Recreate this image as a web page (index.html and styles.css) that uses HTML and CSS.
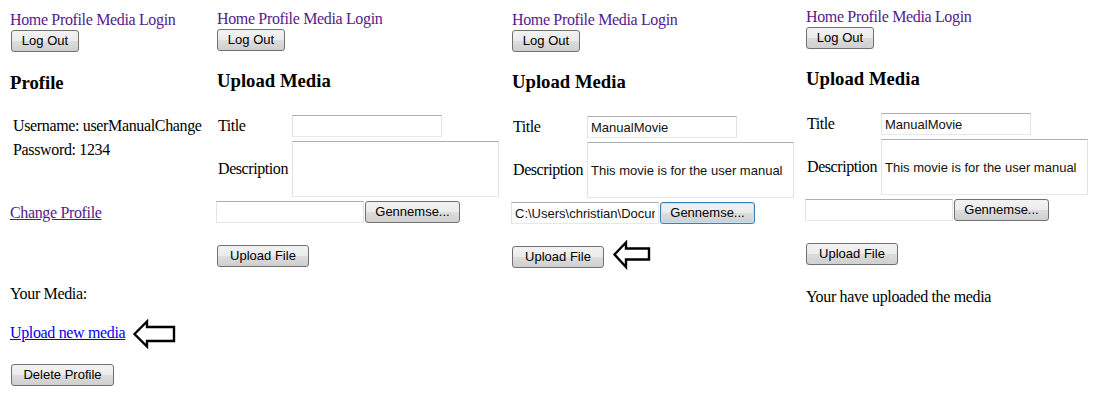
FILE: index.html
```html
<!DOCTYPE html>
<html lang="da">
<head>
<meta charset="utf-8">
<title>User manual screens</title>
<link rel="stylesheet" href="styles.css">
</head>
<body>
<div class="page">
  <section class="panel panel-1">
    <nav class="nav"><a href="#">Home</a> <a href="#">Profile</a> <a href="#">Media</a> <a href="#">Login</a></nav>
    <button class="btn btn-logout" type="button">Log Out</button>
    <h3 class="heading heading-profile">Profile</h3>
    <table class="info">
      <tr><td>Username: userManualChange</td></tr>
      <tr><td>Password: 1234</td></tr>
    </table>
    <div class="line change-line"><a class="link-visited" href="#">Change Profile</a></div>
    <div class="line media-label">Your Media:</div>
    <div class="line link-row"><a class="link-new" href="#">Upload new media</a><svg class="arrow arrow-lg" width="44" height="30" viewBox="0 0 44 30"><path d="M2.5 15 L15 2.5 L15 8 L42 8 L42 22 L15 22 L15 27.5 Z" fill="#fff" stroke="#000" stroke-width="2.4" stroke-linejoin="miter"/></svg></div>
    <button class="btn btn-delete" type="button">Delete Profile</button>
  </section>

  <section class="panel panel-2">
    <nav class="nav"><a href="#">Home</a> <a href="#">Profile</a> <a href="#">Media</a> <a href="#">Login</a></nav>
    <button class="btn btn-logout" type="button">Log Out</button>
    <h3 class="heading">Upload Media</h3>
    <table class="form-table">
      <tr><td class="label">Title</td><td><input class="field field-title" type="text" value="" readonly></td></tr>
      <tr><td class="label">Description</td><td><input class="field field-desc" type="text" value="" readonly></td></tr>
    </table>
    <div class="file-row"><input class="field field-file" type="text" value="" readonly><button class="btn btn-browse" type="button">Gennemse...</button></div>
    <div class="upload-row"><button class="btn btn-upload" type="button">Upload File</button></div>
  </section>

  <section class="panel panel-3">
    <nav class="nav"><a href="#">Home</a> <a href="#">Profile</a> <a href="#">Media</a> <a href="#">Login</a></nav>
    <button class="btn btn-logout" type="button">Log Out</button>
    <h3 class="heading">Upload Media</h3>
    <table class="form-table">
      <tr><td class="label">Title</td><td><input class="field field-title" type="text" value="ManualMovie" readonly></td></tr>
      <tr><td class="label">Description</td><td><input class="field field-desc" type="text" value="This movie is for the user manual" readonly></td></tr>
    </table>
    <div class="file-row"><input class="field field-file" type="text" value="C:\Users\christian\Documents\ManualMovie.avi" readonly><button class="btn btn-browse btn-focus" type="button">Gennemse...</button></div>
    <div class="upload-row"><button class="btn btn-upload" type="button">Upload File</button><svg class="arrow arrow-sm" width="40" height="30" viewBox="0 0 40 30"><path d="M2.5 14.5 L14 2.5 L14 8.5 L37 8.5 L37 19.5 L14 19.5 L14 27 Z" fill="#fff" stroke="#000" stroke-width="2.4" stroke-linejoin="miter"/></svg></div>
  </section>

  <section class="panel panel-4">
    <nav class="nav"><a href="#">Home</a> <a href="#">Profile</a> <a href="#">Media</a> <a href="#">Login</a></nav>
    <button class="btn btn-logout" type="button">Log Out</button>
    <h3 class="heading">Upload Media</h3>
    <table class="form-table">
      <tr><td class="label">Title</td><td><input class="field field-title" type="text" value="ManualMovie" readonly></td></tr>
      <tr><td class="label">Description</td><td><input class="field field-desc" type="text" value="This movie is for the user manual" readonly></td></tr>
    </table>
    <div class="file-row"><input class="field field-file" type="text" value="" readonly><button class="btn btn-browse" type="button">Gennemse...</button></div>
    <div class="upload-row"><button class="btn btn-upload" type="button">Upload File</button></div>
    <div class="line status">Your have uploaded the media</div>
  </section>
</div>
</body>
</html>
```

FILE: styles.css
```css
body {
  margin: 0;
  background: #fff;
  color: #000;
  font-family: "Liberation Serif", "Times New Roman", serif;
  font-size: 16px;
  letter-spacing: -0.35px;
}

.page {
  display: flex;
  align-items: flex-start;
}

.panel {
  flex: none;
  box-sizing: border-box;
  padding-left: 11px;
}

.panel-1 { width: 206px; padding-top: 11px; padding-left: 10px; }
.panel-2 { width: 295px; padding-top: 10px; }
.panel-3 { width: 294px; padding-top: 11px; }
.panel-4 { flex: 1; padding-top: 8px; }

.nav {
  height: 18px;
  line-height: 18px;
  white-space: nowrap;
}

.nav a {
  color: #551a8b;
  text-decoration: none;
}

.btn {
  display: block;
  box-sizing: border-box;
  height: 22px;
  margin: 0;
  padding: 0;
  border: 1px solid #707070;
  border-radius: 3px;
  background: linear-gradient(#f2f2f2 0%, #ebebeb 50%, #dddddd 50%, #cfcfcf 100%);
  color: #000;
  font-family: "Liberation Sans", Arial, sans-serif;
  font-size: 13px;
  line-height: 20px;
  letter-spacing: normal;
  text-align: center;
  white-space: nowrap;
}

.btn-logout { width: 68px; margin-top: 1px; margin-left: 1px; }
.panel-2 .btn-logout,
.panel-3 .btn-logout,
.panel-4 .btn-logout { margin-left: 0; }
.btn-delete { width: 103px; margin-top: 22px; margin-left: 1px; }
.btn-upload { width: 92px; flex: none; }
.btn-browse { width: 95px; flex: none; }

.btn-focus {
  border-color: #3c7fb1;
  box-shadow: inset 0 0 0 1px #bfe2f7;
}

.heading {
  margin: 19px 0 21px;
  font-size: 18.72px;
  line-height: 21px;
  font-weight: bold;
  letter-spacing: normal;
}

.heading-profile { margin: 20px 0 20px; }

.info {
  border-collapse: separate;
  border-spacing: 2px;
}

.info td {
  padding: 1px;
  line-height: 20px;
  white-space: nowrap;
}

.line { line-height: 18px; }

.change-line { margin-top: 41px; }
.media-label { margin-top: 63px; }

.link-visited { color: #551a8b; text-decoration: underline; }
.link-new { color: #0000ee; text-decoration: underline; }

.link-row {
  display: flex;
  align-items: flex-start;
  height: 18px;
  margin-top: 21px;
}

.arrow { flex: none; display: block; }
.arrow-lg { margin: -5px 0 0 7px; }
.arrow-sm { margin: -6px 0 0 8px; }

.form-table {
  border-collapse: separate;
  border-spacing: 2px;
  margin-left: -2px;
}

.form-table td {
  padding: 1px;
  vertical-align: middle;
  white-space: nowrap;
}

.form-table .label {
  letter-spacing: -0.42px;
}

.field {
  display: block;
  box-sizing: border-box;
  height: 22px;
  margin: 0;
  padding: 0 3px;
  border: 1px solid;
  border-color: #abadb3 #e2e3ea #e3e9ef #e2e3ea;
  border-radius: 0;
  background: #fff;
  color: #111;
  font-family: "Liberation Sans", Arial, sans-serif;
  font-size: 13px;
  letter-spacing: normal;
  outline: none;
}

.field-title { width: 150px; }
.field-desc { width: 207px; height: 56px; }
.field-file { width: 148px; flex: none; }

.file-row {
  display: flex;
  gap: 1px;
  margin: 1px 0 0 -1px;
}

.upload-row {
  display: flex;
  align-items: flex-start;
  height: 22px;
  margin-top: 22px;
}

.status { margin-top: 23px; }
```
